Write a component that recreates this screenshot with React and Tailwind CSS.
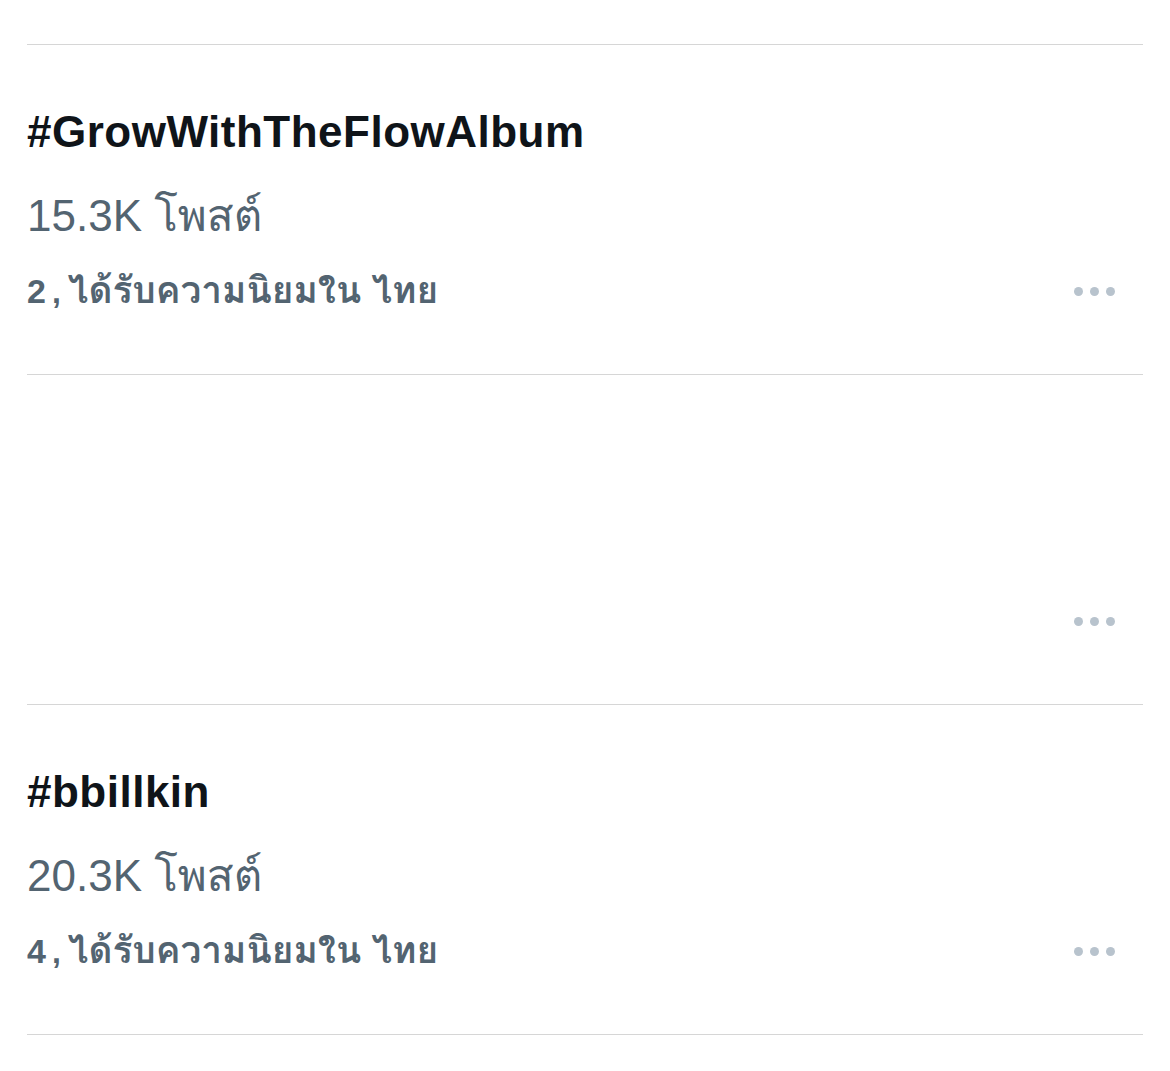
import React from "react";

const trends = [
  { tag: "#GrowWithTheFlowAlbum", posts: "15.3K โพสต์", rank: "2", meta: "ได้รับความนิยมใน ไทย" },
  null,
  { tag: "#bbillkin", posts: "20.3K โพสต์", rank: "4", meta: "ได้รับความนิยมใน ไทย" },
];

function Dots() {
  return (
    <div className="flex items-center gap-[7px] pr-[28px]">
      <span className="block h-[9px] w-[9px] rounded-full bg-[#b8c3cd]" />
      <span className="block h-[9px] w-[9px] rounded-full bg-[#b8c3cd]" />
      <span className="block h-[9px] w-[9px] rounded-full bg-[#b8c3cd]" />
    </div>
  );
}

function Trend({ t }) {
  return (
    <div className="h-[330px] border-b border-[#d6d6d6] pt-[61px]">
      <div className="h-[52px] text-[44px] leading-[52px] font-bold text-[#0f1419] tracking-[0.5px]">
        {t ? t.tag : ""}
      </div>
      <div className="mt-[32px] h-[52px] text-[44px] leading-[52px] text-[#536471]">
        {t ? t.posts : ""}
      </div>
      <div className="mt-[23px] flex h-[52px] items-center justify-between">
        <div className="flex items-baseline font-bold leading-[52px] text-[#536471]">
          {t ? (
            <>
              <span className="text-[34px] tracking-[1px]">{t.rank}</span>
              <span className="ml-[5px] mr-[7px] text-[32px]">,</span>
              <span className="text-[37px]">{t.meta}</span>
            </>
          ) : null}
        </div>
        <Dots />
      </div>
    </div>
  );
}

export default function App() {
  return (
    <div className="min-h-[1071px] w-[1170px] bg-white pt-[44px] font-['Liberation_Sans',Loma,sans-serif]">
      <div className="ml-[27px] mr-[27px] border-t border-[#d6d6d6]">
        {trends.map((t, i) => (
          <Trend key={i} t={t} />
        ))}
      </div>
    </div>
  );
}
